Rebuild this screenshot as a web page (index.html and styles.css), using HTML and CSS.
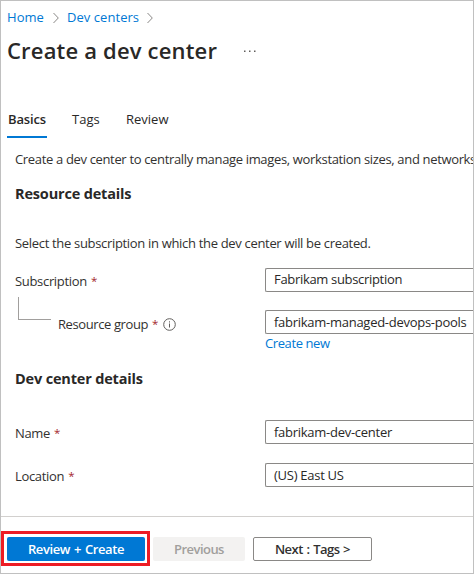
FILE: index.html
```
<!DOCTYPE html>
<html lang="en">
<head>
<meta charset="utf-8">
<title>Create a dev center</title>
<link rel="stylesheet" href="styles.css">
</head>
<body>
<div class="page">
  <nav class="breadcrumb">
    <a class="home">Home</a>
    <svg class="chevron" viewBox="0 0 6 12"><path d="M.5 1 5.3 6 .5 11"/></svg>
    <a class="centers">Dev centers</a>
    <svg class="chevron" viewBox="0 0 6 12"><path d="M.5 1 5.3 6 .5 11"/></svg>
  </nav>
  <header class="heading">
    <h1>Create a dev center</h1>
    <svg class="more" viewBox="0 0 12 2"><path d="M0 .5h1.5V2H0zM5 .5h1.5V2H5zM10 .5h1.5V2H10z"/></svg>
  </header>
  <div class="tabs">
    <div class="tab active">Basics</div>
    <div class="tab tags">Tags</div>
    <div class="tab review">Review</div>
  </div>
  <main class="form">
    <p class="intro">Create a dev center to centrally manage images, workstation sizes, and networks</p>
    <h2 class="resource-title">Resource details</h2>
    <p class="hint">Select the subscription in which the dev center will be created.</p>
    <div class="row subscription">
      <label><span class="label-sub">Subscription</span><span class="req">*</span></label>
      <div class="input"><span class="value-sub">Fabrikam subscription</span></div>
    </div>
    <div class="row group">
      <label><i class="elbow"></i><span class="label-group">Resource group</span><span class="req">*</span>
        <svg class="info" viewBox="0 0 13 13"><circle cx="6.5" cy="6.5" r="5.8"/><path d="M6.5 5.5v4M6.5 3.3v1.2"/></svg></label>
      <div class="input"><span class="value-group">fabrikam-managed-devops-pools</span></div>
    </div>
    <a class="create-new">Create new</a>
    <h2 class="center-title">Dev center details</h2>
    <div class="row name">
      <label><span class="label-name">Name</span><span class="req">*</span></label>
      <div class="input"><span class="value-name">fabrikam-dev-center</span></div>
    </div>
    <div class="row location">
      <label><span class="label-location">Location</span><span class="req">*</span></label>
      <div class="input"><span class="value-location">(US) East US</span></div>
    </div>
  </main>
  <footer class="actions">
    <div class="highlight"><button class="btn primary">Review + Create</button></div>
    <button class="btn disabled">Previous</button>
    <button class="btn next">Next : Tags &gt;</button>
  </footer>
</div>
</body>
</html>
```
FILE: styles.css
```
* { box-sizing: border-box; }
body {
  margin: 0;
  font: 13px/18px "Open Sans", "Noto Sans", sans-serif;
  letter-spacing: -0.32px;
  color: #323130;
  background: #fff;
}
h1, h2, p { margin: 0; white-space: nowrap; }
.page {
  width: 474px;
  height: 574px;
  border: 1px solid #c0c0c0;
  overflow: hidden;
  display: flex;
  flex-direction: column;
}
a { color: #0078d4; white-space: nowrap; }

.breadcrumb { display: flex; align-items: center; height: 18px; margin-top: 7px; padding-left: 6px; letter-spacing: 0.05px; }
.breadcrumb .home { width: 46px; }
.breadcrumb .centers { width: 80px; margin-left: 8px; }
.chevron { width: 6px; height: 12px; margin-top: 1px; fill: none; stroke: #8a8886; }

.heading { display: flex; align-items: center; height: 30px; margin-top: 9px; padding-left: 6px; }
.heading h1 { width: 237px; font-size: 22px; line-height: 30px; font-weight: 600; color: #292827; letter-spacing: 0.18px; }
.more { width: 12px; height: 2px; margin-top: 2px; fill: #605e5c; }

.tabs { display: flex; height: 29px; margin-top: 44px; padding-left: 6px; letter-spacing: 0; }
.tab { height: 29px; padding-top: 1px; line-height: 18px; color: #292827; }
.tab.active { width: 40px; font-weight: 600; border-bottom: 2px solid #0078d4; padding-left: 1px; letter-spacing: -0.15px; }
.tab.tags { width: 54px; margin-left: 25px; }

.form { padding-left: 14px; height: 378px; display: flex; flex-direction: column; }
.intro { line-height: 18px; margin-top: 12px; letter-spacing: -0.34px; }
h2 { font-size: 14.5px; line-height: 20px; font-weight: 700; color: #292827; letter-spacing: -0.17px; }
.resource-title { margin-top: 16px; }
.hint { margin-top: 30px; }
.row { display: flex; height: 24px; flex: none; }
.row label { width: 250px; height: 24px; display: flex; align-items: center; padding-top: 2px; white-space: nowrap; }
.req { font-size: 11.5px; color: #a4262c; margin-left: 4px; }
.input {
  flex: 1;
  border: 1px solid #8a8886;
  border-right: 0;
  border-radius: 2px 0 0 2px;
  padding-left: 8px;
  line-height: 21px;
  white-space: nowrap;
  color: #292827;
}
.subscription { margin-top: 16px; }
.group { margin-top: 18px; }
.group label { padding-top: 4px; }
.label-group { letter-spacing: -0.4px; }
.group .input, .name .input, .location .input { line-height: 23px; letter-spacing: -0.27px; }
.elbow { width: 33px; height: 23px; border: solid #a19f9d; border-width: 0 0 1px 1px; margin: -31px 7px 0 3px; }
.info { width: 13px; height: 13px; margin: 1px 0 0 5px; fill: none; stroke: #605e5c; }
.create-new { display: block; margin-left: 250px; height: 18px; letter-spacing: -0.4px; }
.center-title { margin-top: 17px; }
.name { margin-top: 31px; }
.location { margin-top: 19px; }

.actions { display: flex; border-top: 1px solid #d2d0ce; height: 57px; padding-top: 14px; }
.highlight { width: 149px; height: 35px; border: 3px solid #ed1c24; padding: 3px; }
.btn {
  display: block;
  height: 24px;
  border: 0;
  border-radius: 2px;
  padding: 0;
  font: 600 13px/24px "Open Sans", "Noto Sans", sans-serif;
  white-space: nowrap;
}
.primary { width: 138px; background: #0078d4; color: #fff; letter-spacing: -0.4px; word-spacing: 1px; }
.disabled { width: 92px; margin: 6px 0 0 3px; background: #f3f2f1; color: #a19f9d; letter-spacing: -0.55px; }
.next { width: 119px; margin: 6px 0 0 8px; background: #fff; border: 1px solid #8a8886; color: #323130; line-height: 22px; letter-spacing: -0.5px; word-spacing: 0.7px; }
```
